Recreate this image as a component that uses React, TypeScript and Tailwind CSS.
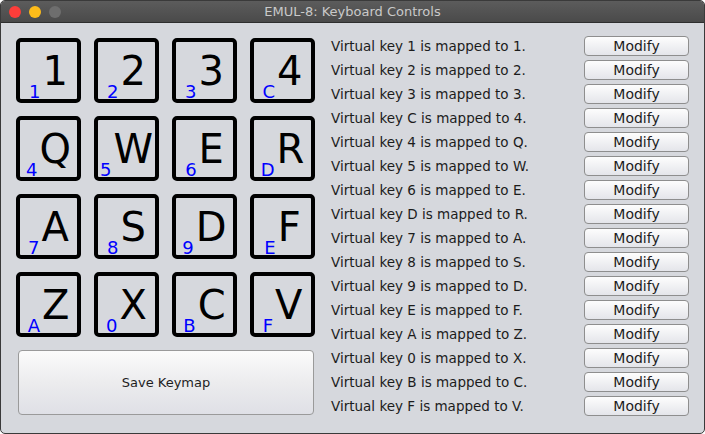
const keys = [
  { big: '1', small: '1' }, { big: '2', small: '2' }, { big: '3', small: '3' }, { big: '4', small: 'C' },
  { big: 'Q', small: '4' }, { big: 'W', small: '5' }, { big: 'E', small: '6' }, { big: 'R', small: 'D' },
  { big: 'A', small: '7' }, { big: 'S', small: '8' }, { big: 'D', small: '9' }, { big: 'F', small: 'E' },
  { big: 'Z', small: 'A' }, { big: 'X', small: '0' }, { big: 'C', small: 'B' }, { big: 'V', small: 'F' },
];

const font = { fontFamily: '"DejaVu Sans", "Noto Sans", sans-serif' };

export default function App() {
  return (
    <div className="w-[705px] h-[434px] bg-[#d6d8dd] flex flex-col rounded-[5px] border border-[#3a3a3a] overflow-hidden" style={font}>
      {/* Title bar */}
      <div className="h-[22px] shrink-0 bg-gradient-to-b from-[#5c5c5c] to-[#4a4a4a] border-b border-[#2e2e2e] flex items-center relative">
        <div className="flex items-center gap-[8px] pl-[8px]">
          <span className="w-[12px] h-[12px] rounded-full bg-[#fc3d3a]" />
          <span className="w-[12px] h-[12px] rounded-full bg-[#fdbc1a]" />
          <span className="w-[12px] h-[12px] rounded-full bg-[#6e6e6e]" />
        </div>
        <p className="absolute inset-x-0 text-center text-[13px] text-[#c9c9c9] leading-none">EMUL-8: Keyboard Controls</p>
      </div>

      {/* Body */}
      <div className="flex flex-1 pl-[15px] pt-[15px]">
        {/* Keypad */}
        <div className="flex flex-col w-[299px]">
          <div className="grid grid-cols-4 gap-[13px]">
            {keys.map(k => (
              <div key={k.big} className="w-[65px] h-[65px] border-[4px] border-black rounded-[5px] flex items-end justify-center">
                <span className="text-[18px] leading-none text-[#0000ff] mb-[-2px] mr-[2px]">{k.small}</span>
                <span className="text-[40px] leading-none text-black mb-[8px]">{k.big}</span>
              </div>
            ))}
          </div>
          <button className="mt-[13px] ml-[2px] w-[296px] h-[65px] rounded-[4px] border border-[#9a9a9a] bg-gradient-to-b from-[#fbfbfb] via-[#ececee] to-[#dfe0e6] text-[13px] text-[#1e1e1e]">
            Save Keymap
          </button>
        </div>

        {/* Mapping list */}
        <div className="flex flex-col ml-[16px] mt-[-4px] w-[358px]">
          {keys.map(k => (
            <div key={k.big} className="h-[24px] flex items-center">
              <span className="flex-1 text-[13.5px] text-[#1c1c1c]">Virtual key {k.small} is mapped to {k.big}.</span>
              <button className="w-[105px] h-[20px] rounded-[4px] border border-[#8e8e8e] bg-gradient-to-b from-[#fdfdfd] to-[#e4e5ea] text-[14px] leading-none text-[#1c1c1c]">
                Modify
              </button>
            </div>
          ))}
        </div>
      </div>
    </div>
  );
}
